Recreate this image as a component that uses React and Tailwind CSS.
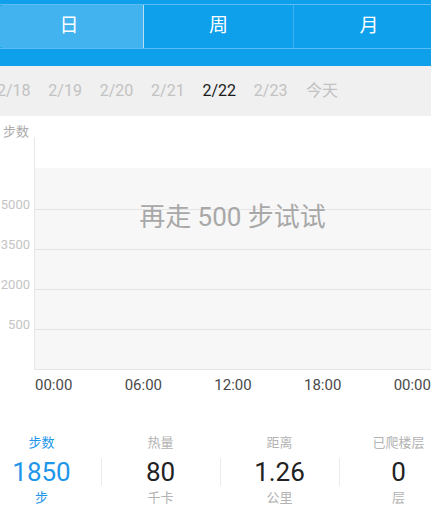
import React from "react";

const font = { fontFamily: "Roboto, 'Noto Sans CJK SC', sans-serif" };

function Tabs() {
  return (
    <div className="h-[66px] bg-[#0ea0eb] pt-[4px] overflow-hidden">
      <div className="flex h-[45px] ml-[-5px] w-[460px] border-y border-[#5cbdf2]">
        <div className="w-[149px] bg-[#43b3f0] rounded-l-[9px] flex items-center justify-center text-white text-[19px] border-r border-[#b5e0f8]">
          日
        </div>
        <div className="w-[150px] flex items-center justify-center text-white text-[19px] border-r border-[#3fb1ef]">
          周
        </div>
        <div className="w-[150px] flex items-center justify-center text-white text-[19px]">
          月
        </div>
      </div>
    </div>
  );
}

const dates = ["2/18", "2/19", "2/20", "2/21", "2/22", "2/23", "今天"];

function Dates() {
  return (
    <div className="h-[50px] bg-[#f0f0f0] flex items-center overflow-hidden">
      <div className="flex ml-[-12px]">
        {dates.map((d) => (
          <div
            key={d}
            className={
              "w-[51.4px] shrink-0 text-center text-[16px] " +
              (d === "2/22" ? "text-[#1a1a1a]" : "text-[#c2c2c2]")
            }
          >
            {d}
          </div>
        ))}
      </div>
    </div>
  );
}

const grid = [
  { label: "5000", y: 93 },
  { label: "3500", y: 133 },
  { label: "2000", y: 173 },
  { label: "500", y: 213 },
];

function Chart() {
  return (
    <div className="relative h-[290px] bg-white overflow-hidden">
      <div className="absolute left-[3px] top-[8px] text-[13px] leading-[16px] text-[#ababab]">步数</div>
      <div className="absolute left-[34px] top-[21px] w-px h-[233px] bg-[#e8e8e8]" />
      <div className="absolute left-[35px] right-0 top-[52px] h-[202px] bg-[#f7f7f7] border-b border-[#e6e6e6]" />
      {grid.map((g) => (
        <React.Fragment key={g.label}>
          <div className="absolute left-[35px] right-0 h-px bg-[#e4e4e4]" style={{ top: g.y }} />
          <div
            className="absolute w-[30px] text-right text-[13px] leading-[16px] text-[#c4c4c4]"
            style={{ top: g.y - 12, left: 0 }}
          >
            {g.label}
          </div>
        </React.Fragment>
      ))}
      <div className="absolute left-0 right-0 top-[85px] text-center text-[26px] leading-[32px] text-[#a8a8a8] pl-[34px]">
        再走 500 步试试
      </div>
      <div className="absolute left-[35px] right-0 top-[260px] flex justify-between text-[15px] leading-[18px] text-[#4a4a4a]">
        <span>00:00</span>
        <span>06:00</span>
        <span>12:00</span>
        <span>18:00</span>
        <span>00:00</span>
      </div>
    </div>
  );
}

const stats = [
  { title: "步数", value: "1850", unit: "步", active: true },
  { title: "热量", value: "80", unit: "千卡" },
  { title: "距离", value: "1.26", unit: "公里" },
  { title: "已爬楼层", value: "0", unit: "层" },
];

function Stats() {
  return (
    <div className="flex ml-[-18px] pt-[28px] bg-white">
      {stats.map((s, i) => (
        <div key={s.title} className="w-[119px] shrink-0 relative flex flex-col items-center">
          {i > 0 && <div className="absolute left-0 top-[24px] h-[28px] w-px bg-[#ececec]" />}
          <div className={"text-[13px] leading-[18px] " + (s.active ? "text-[#1e96ea]" : "text-[#b3b3b3]")}>
            {s.title}
          </div>
          <div className={"mt-[5px] text-[26px] leading-[30px] " + (s.active ? "text-[#1e96ea]" : "text-[#222222]")}>
            {s.value}
          </div>
          <div className={"mt-[2px] text-[13px] leading-[18px] " + (s.active ? "text-[#1e96ea]" : "text-[#b3b3b3]")}>
            {s.unit}
          </div>
        </div>
      ))}
    </div>
  );
}

export default function App() {
  return (
    <div className="w-[431px] h-[525px] overflow-hidden bg-white" style={font}>
      <Tabs />
      <Dates />
      <Chart />
      <Stats />
    </div>
  );
}
